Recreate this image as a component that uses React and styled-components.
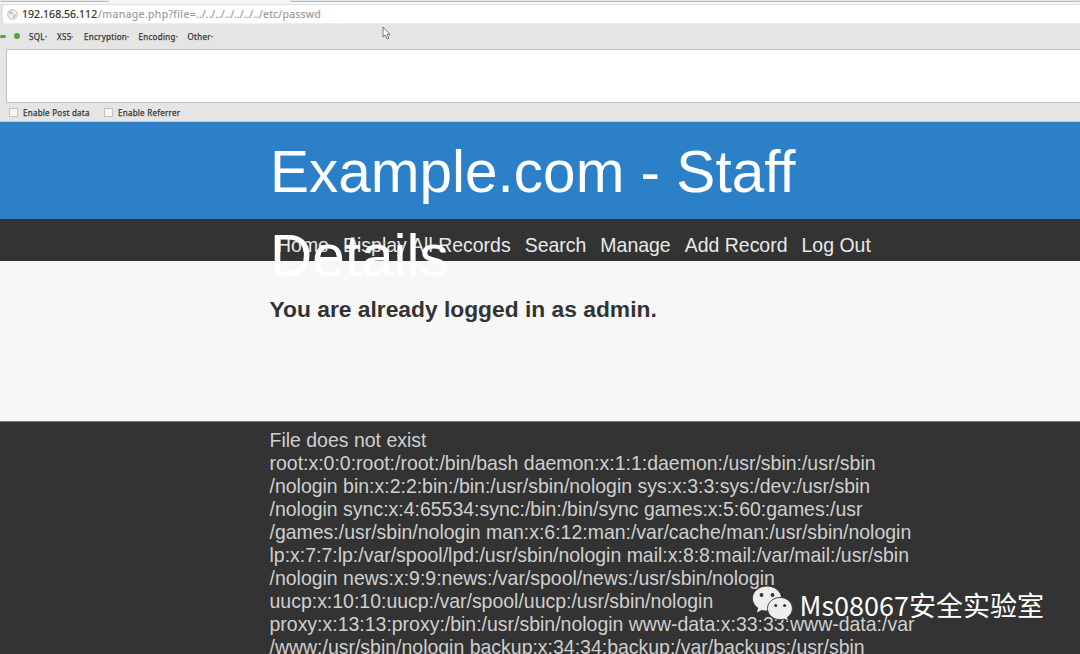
import React from "react";
import styled, { createGlobalStyle } from "styled-components";

const Global = createGlobalStyle`
  * { box-sizing: border-box; }
  html, body { margin: 0; padding: 0; overflow: hidden; }
  body { font-family: "Liberation Sans", Arial, sans-serif; }
`;
const Page = styled.div`
  width: 1080px; height: 654px; overflow: hidden; position: relative;
  display: flex; flex-direction: column; background: #f7f7f7;
`;
const Chrome = styled.div`
  flex: none; height: 122px; background: #e5e5e5; display: flex; flex-direction: column;
  font-family: "Noto Sans", sans-serif; color: #383838; border-bottom: 1px solid #b9cbdc;
`;
const TabStrip = styled.div`
  height: 5px; display: flex; justify-content: space-between; background: #f6f6f6; border-bottom: 1px solid #e0e0e0;
`;
const Tab = styled.div`
  width: ${(p) => p.$w}px; height: 2px; background: #e9e9ec; border-bottom: 1px solid #b9b9bf;
  border-radius: 0 0 3px 3px;
`;
const AddressBar = styled.div`
  height: 19px; margin-left: 3px; padding-left: 4px; background: #fff; display: flex; align-items: center;
  gap: 4px; border-radius: 4px 0 0 4px; border-bottom: 1px solid #ededed;
`;
const Url = styled.div`
  font-size: 10.5px; line-height: 18px; color: #999; white-space: pre; display: flex; 
`;
const Host = styled.span` color: #303030; width: 76px; letter-spacing: 0.05px; -webkit-text-stroke: 0.2px #303030; `;
const Path = styled.span` letter-spacing: ${(p) => p.$ls}px; -webkit-text-stroke: 0.15px #999; `;
const Tools = styled.div`
  height: 24px; margin-bottom: 1px; display: flex; align-items: center; font-size: 8px;
`;
const Dot = styled.i`
  width: ${(p) => p.$w}px; height: ${(p) => p.$h}px; border-radius: 3px; background: #57a639; margin-right: ${(p) => p.$mr}px;
`;
const Tool = styled.span`
  width: ${(p) => p.$w}px; white-space: nowrap; letter-spacing: 0.28px; -webkit-text-stroke: 0.25px #383838;
  display: flex; align-items: center;
  &::after {
    content: ""; border: 1.5px solid transparent; border-top: 2px solid #555; border-bottom: 0; margin-top: 1px;
  }
`;
const TextBox = styled.div`
  height: 54px; margin-left: 6px; background: #fff; border: 1px solid #bfbfbf; border-right: 0;
`;
const Options = styled.div`
  height: 18px; display: flex; align-items: center; padding: 0 0 0 9px; font-size: 8px;
`;
const Option = styled.div`
  width: 95px; display: flex; align-items: center; gap: 5px; white-space: nowrap;
  letter-spacing: 0.25px; -webkit-text-stroke: 0.25px #383838;
`;
const Box = styled.i` width: 9px; height: 9px; background: #f5f5f5; border: 1px solid #c3c3c3; `;

const Banner = styled.header`
  flex: none; height: 97px; background: #2b80c8; padding-left: 270px; position: relative; z-index: 1;
`;
const Title = styled.h1`
  margin: 0; width: 640px; padding-top: 8px; font-weight: 400; font-size: 58.5px; line-height: 84px; color: #fdfeff;
`;
const Nav = styled.nav`
  flex: none; height: 42px; background: #333; display: flex; align-items: center; padding: 10px 0 0 277px;
  gap: 14px; font-size: 19.48px; line-height: 22px; color: #e9e9e9; white-space: nowrap;
`;
const Main = styled.main` flex: none; height: 160px; padding: 35px 0 0 269.5px; `;
const Heading = styled.h2`
  margin: 0; font-size: 22.8px; line-height: 26px; font-weight: 700; color: #333; white-space: nowrap;
`;
const Output = styled.footer`
  flex: none; height: 233px; overflow: hidden; background: #333; border-top: 1px solid #777;
  padding: 7px 0 0 269.5px; font-size: 19.48px; line-height: 23px; color: #cfcfcf;
`;
const Line = styled.div` white-space: pre; `;
const Watermark = styled.div`
  position: absolute; left: 752px; top: 586px; display: flex; color: #fff; z-index: 2;
  font-family: "Noto Sans CJK SC", sans-serif; font-size: 27px; line-height: 38px; white-space: nowrap;
`;
const MarkText = styled.span` margin-left: 6.5px; `;
const Cursor = styled.svg` position: absolute; left: 382px; top: 26px; `;

const lines = [
  "File does not exist",
  "root:x:0:0:root:/root:/bin/bash daemon:x:1:1:daemon:/usr/sbin:/usr/sbin",
  "/nologin bin:x:2:2:bin:/bin:/usr/sbin/nologin sys:x:3:3:sys:/dev:/usr/sbin",
  "/nologin sync:x:4:65534:sync:/bin:/bin/sync games:x:5:60:games:/usr",
  "/games:/usr/sbin/nologin man:x:6:12:man:/var/cache/man:/usr/sbin/nologin",
  "lp:x:7:7:lp:/var/spool/lpd:/usr/sbin/nologin mail:x:8:8:mail:/var/mail:/usr/sbin",
  "/nologin news:x:9:9:news:/var/spool/news:/usr/sbin/nologin",
  "uucp:x:10:10:uucp:/var/spool/uucp:/usr/sbin/nologin",
  "proxy:x:13:13:proxy:/bin:/usr/sbin/nologin www-data:x:33:33:www-data:/var",
  "/www:/usr/sbin/nologin backup:x:34:34:backup:/var/backups:/usr/sbin",
];
const links = ["Home", "Display All Records", "Search", "Manage", "Add Record", "Log Out"];
const tools = [["SQL", 28], ["XSS", 27], ["Encryption", 54.5], ["Encoding", 49], ["Other", 30]];

export default function App() {
  return (
    <Page>
      <Global />
      <Chrome>
        <TabStrip><Tab $w={109} /><Tab $w={790} /></TabStrip>
        <AddressBar>
          <svg width="11" height="11" viewBox="0 0 11 11">
            <circle cx="5.5" cy="5.5" r="4.8" fill="#f1f1f1" stroke="#bbb" />
            <path d="M2 3l2-1 2 1-1 2-2 1zM6 6l3-1-1 3-2 1z" fill="#c4c4c4" />
          </svg>
          <Url>
            <Host>192.168.56.112</Host>
            <Path $ls={0.35}>/manage.php?file=</Path>
            <Path $ls={0}>../../../../../../..</Path>
            <Path $ls={0.2}>/etc/passwd</Path>
          </Url>
        </AddressBar>
        <Tools>
          <Dot $w={6} $h={3} $mr={8} /><Dot $w={6} $h={6} $mr={9} />
          {tools.map(([t, w]) => <Tool key={t} $w={w}>{t}</Tool>)}
        </Tools>
        <TextBox />
        <Options>
          <Option><Box />Enable Post data</Option>
          <Option><Box />Enable Referrer</Option>
        </Options>
      </Chrome>
      <Banner><Title>Example.com - Staff Details</Title></Banner>
      <Nav>{links.map((l) => <span key={l}>{l}</span>)}</Nav>
      <Main><Heading>You are already logged in as admin.</Heading></Main>
      <Output>{lines.map((l) => <Line key={l}>{l}</Line>)}</Output>
      <Cursor width="9" height="14" viewBox="0 0 9 14">
        <path d="M1 1v10l2.3-2 1.8 4 1.7-.8L5 8.4h3z" fill="#fff" stroke="#666" strokeWidth=".9" />
      </Cursor>
      <Watermark>
        <svg width="41" height="36" viewBox="0 0 41 36">
          <path d="M15 .5C7 .5.8 5.7.8 12.5c0 4 2.100 7.200 5.400 9.400L4.800 26.500l5-2.600c1.700.5 3.400.7 5.200.7 8 0 14.200-5.300 14.200-12.100S23 .5 15 .5z" fill="#eee" />
          <path d="M28 11.500c-7 0-12.500 4.900-12.500 11.100S21 33.600 28 33.600c1.600 0 3-.2 4.300-.6l4.300 2.200-1.200-3.900c3.100-2 5-5.200 5-8.700 0-6.200-5.400-11.100-12.400-11.100z" fill="#eee" stroke="#444" strokeWidth="1" />
          <g fill="#333"><circle cx="9.500" cy="9" r="1.900" /><circle cx="20.500" cy="9" r="1.900" /><circle cx="23.700" cy="19.500" r="1.500" /><circle cx="32.600" cy="19.500" r="1.500" /></g>
        </svg>
        <MarkText>Ms08067安全实验室</MarkText>
      </Watermark>
    </Page>
  );
}
